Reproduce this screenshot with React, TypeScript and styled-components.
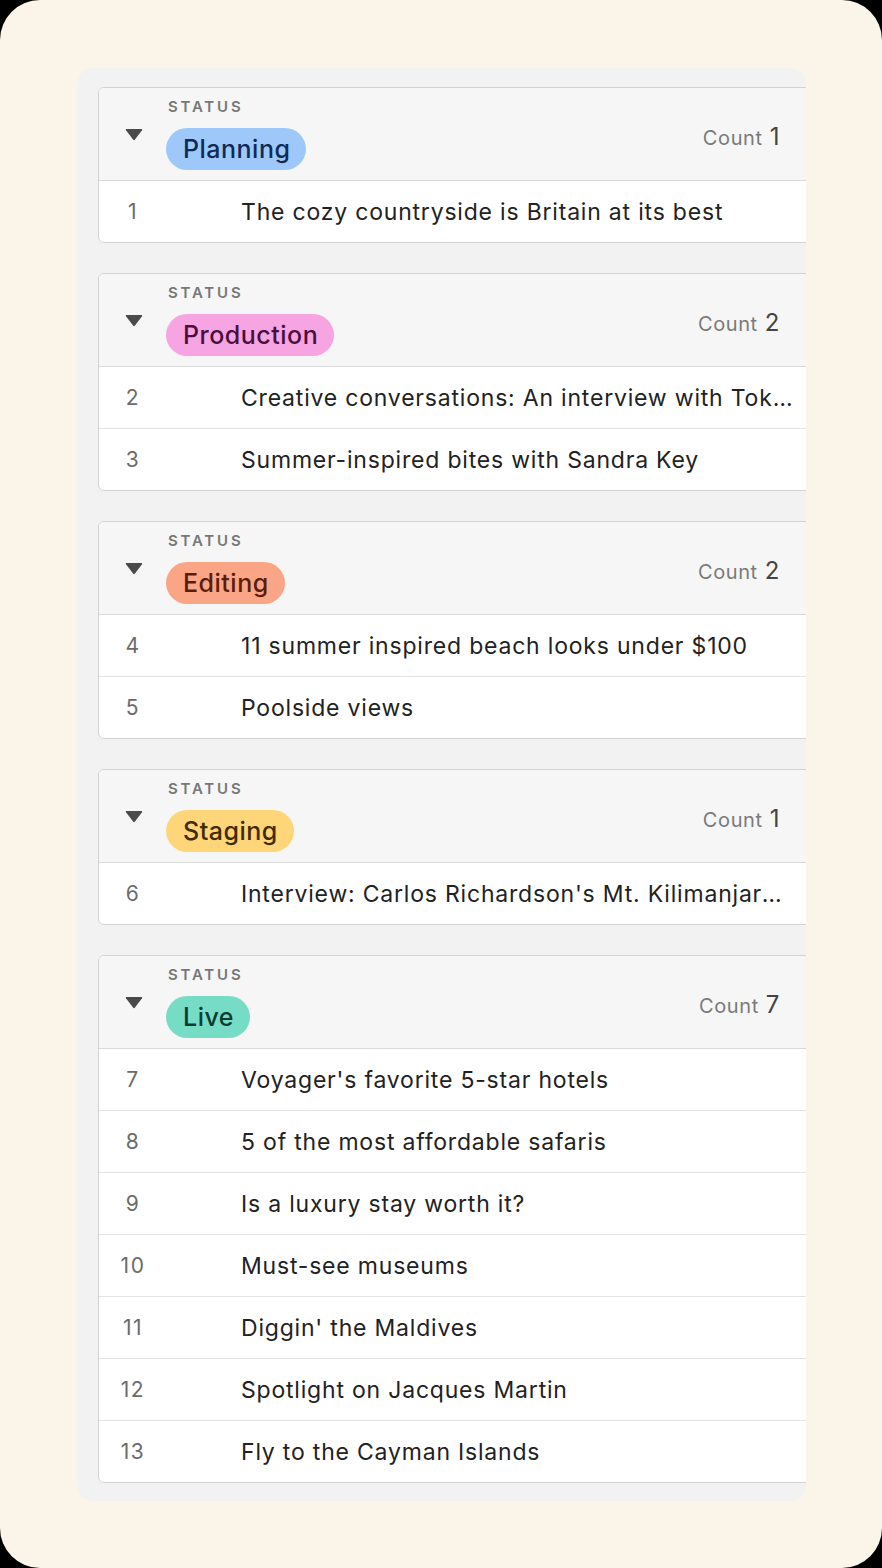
import styled, { createGlobalStyle } from "styled-components";

const GlobalStyle = createGlobalStyle`
  html, body {
    margin: 0;
    padding: 0;
    background: #000;
  }
  * { box-sizing: border-box; }
`;

interface Group {
  status: string;
  bg: string;
  fg: string;
  items: string[];
}

const groups: Group[] = [
  {
    status: "Planning",
    bg: "#9ec8fa",
    fg: "#102a55",
    items: ["The cozy countryside is Britain at its best"],
  },
  {
    status: "Production",
    bg: "#f6a4e2",
    fg: "#4a0f3c",
    items: [
      "Creative conversations: An interview with Tokyo's most celebrated chef",
      "Summer-inspired bites with Sandra Key",
    ],
  },
  {
    status: "Editing",
    bg: "#fba587",
    fg: "#5a1d0c",
    items: ["11 summer inspired beach looks under $100", "Poolside views"],
  },
  {
    status: "Staging",
    bg: "#ffd57a",
    fg: "#3f2c00",
    items: ["Interview: Carlos Richardson's Mt. Kilimanjaro climb"],
  },
  {
    status: "Live",
    bg: "#76dcc6",
    fg: "#0b3a2f",
    items: [
      "Voyager's favorite 5-star hotels",
      "5 of the most affordable safaris",
      "Is a luxury stay worth it?",
      "Must-see museums",
      "Diggin' the Maldives",
      "Spotlight on Jacques Martin",
      "Fly to the Cayman Islands",
    ],
  },
];

const Frame = styled.div`
  width: 882px;
  height: 1568px;
  background: #fbf4e9;
  border-radius: 40px;
  padding: 68px 0 0 77px;
  font-family: Inter, "Noto Sans", "Liberation Sans", sans-serif;
`;

const Panel = styled.div`
  width: 729px;
  background: #f2f2f2;
  border-radius: 16px;
  padding: 19px 0 18px 21px;
  overflow: hidden;
  display: flex;
  flex-direction: column;
  gap: 30px;
`;

const GroupBox = styled.div`
  width: 820px;
  background: #fff;
  border: 1px solid #d2d2d2;
  border-radius: 6px;
  overflow: hidden;
`;

const Header = styled.div`
  height: 93px;
  background: #f6f6f6;
  border-bottom: 1px solid #d9d9d9;
  display: grid;
  grid-template-columns: 69px 630px 1fr;
`;

const ArrowCell = styled.div`
  display: flex;
  justify-content: center;
  padding-top: 40px;
`;

const HeaderMain = styled.div`
  display: flex;
  justify-content: space-between;
  align-items: center;
  padding-right: 18px;
`;

const Info = styled.div`
  display: flex;
  flex-direction: column;
  align-items: flex-start;
  align-self: flex-start;
  padding-top: 10px;
`;

const Label = styled.div`
  font-size: 15px;
  line-height: 17px;
  font-weight: 600;
  letter-spacing: 2.8px;
  color: #777;
`;

const Pill = styled.span<{ $bg: string; $fg: string }>`
  margin: 13px 0 0 -2px;
  height: 42px;
  display: inline-flex;
  align-items: center;
  padding: 0 16px 0 17px;
  border-radius: 21px;
  background: ${(p) => p.$bg};
  color: ${(p) => p.$fg};
  font-size: 25px;
  font-weight: 500;
  letter-spacing: 0.5px;
`;

const Count = styled.div`
  padding-top: 4px;
  display: flex;
  align-items: baseline;
  gap: 7px;
  color: #7a7a7a;
  font-size: 20px;
  letter-spacing: 0.6px;
`;

const CountNum = styled.span`
  font-size: 24px;
  color: #444;
`;

const Row = styled.div`
  height: 62px;
  display: grid;
  grid-template-columns: 69px 630px 1fr;
  align-items: center;
  border-top: 1px solid #e3e3e3;
  &:first-of-type {
    height: 61px;
    border-top: none;
  }
`;

const Num = styled.div`
  text-align: center;
  font-size: 21px;
  color: #6b6b6b;
  letter-spacing: 1.5px;
  padding-right: 1px;
`;

const Title = styled.div`
  padding-left: 73px;
  padding-right: 4px;
  font-size: 23px;
  letter-spacing: 0.8px;
  color: #222;
  white-space: nowrap;
  overflow: hidden;
  text-overflow: ellipsis;
`;

const Arrow = () => (
  <svg width="18" height="13" viewBox="0 0 18 13">
    <path
      d="M1.6 1 H16.4 Q17.8 1 17 2.3 L10 11.6 Q9 12.8 8 11.6 L1 2.3 Q0.2 1 1.6 1 Z"
      fill="#4a4a4a"
    />
  </svg>
);

export default function App() {
  let counter = 0;
  return (
    <>
      <GlobalStyle />
      <Frame>
        <Panel>
          {groups.map((g) => (
            <GroupBox key={g.status}>
              <Header>
                <ArrowCell>
                  <Arrow />
                </ArrowCell>
                <HeaderMain>
                  <Info>
                    <Label>STATUS</Label>
                    <Pill $bg={g.bg} $fg={g.fg}>
                      {g.status}
                    </Pill>
                  </Info>
                  <Count>
                    Count <CountNum>{g.items.length}</CountNum>
                  </Count>
                </HeaderMain>
                <span />
              </Header>
              <div>
                {g.items.map((item) => {
                  counter += 1;
                  return (
                    <Row key={item}>
                      <Num>{counter}</Num>
                      <Title>{item}</Title>
                      <span />
                    </Row>
                  );
                })}
              </div>
            </GroupBox>
          ))}
        </Panel>
      </Frame>
    </>
  );
}
